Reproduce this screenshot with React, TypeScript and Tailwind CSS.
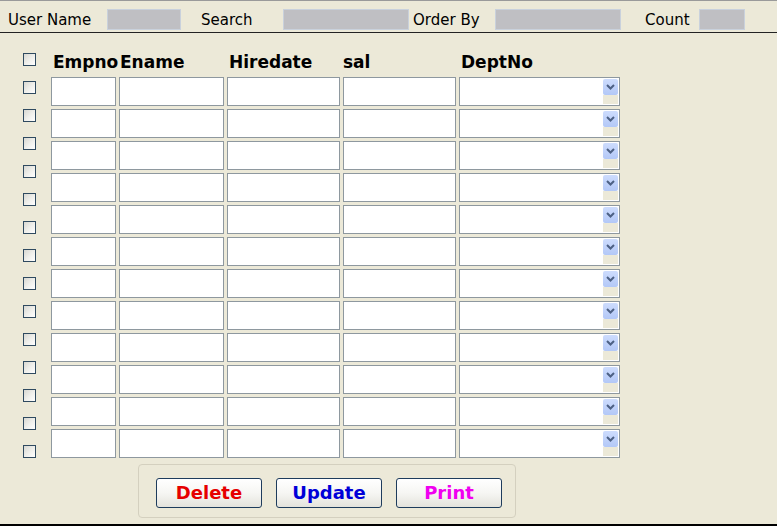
import React from "react"

const cols = [
  { name: "Empno", w: "w-[65px]", pad: "pl-[2px]" },
  { name: "Ename", w: "w-[105px]", pad: "pl-[1px]" },
  { name: "Hiredate", w: "w-[113px]", pad: "pl-[2px]" },
  { name: "sal", w: "w-[113px]", pad: "pl-0" },
]

const rows = Array.from({ length: 12 }, (_, i) => i)
const checks = Array.from({ length: 15 }, (_, i) => i)

function CheckBox() {
  return (
    <div className="w-[13px] h-[13px] border border-[#2f4a60] bg-gradient-to-br from-[#d8d8d2] via-[#eeeeea] to-white" />
  )
}

function DeptSelect() {
  return (
    <div className="w-[161px] h-[29px] flex border border-[#8e989f] bg-white p-[1px]">
      <div className="flex-1" />
      <div className="w-[15px] flex flex-col">
        <div className="h-[16px] rounded-[2px] bg-gradient-to-b from-[#cddcfd] to-[#b3c8f7] flex items-center justify-center">
          <svg width="9" height="6" viewBox="0 0 9 6">
            <path d="M1 1 L4.5 4.5 L8 1" fill="none" stroke="#4d6185" strokeWidth="2" />
          </svg>
        </div>
        <div className="flex-1 bg-[#ece9d8]" />
      </div>
    </div>
  )
}

function XpButton({ label, color }: { label: string; color: string }) {
  return (
    <button
      className={`w-[106px] h-[30px] rounded-[3px] border border-[#1e3c5c] bg-gradient-to-b from-white via-[#f6f6f3] to-[#e4e3dc] font-bold text-[18px] leading-none ${color}`}
    >
      {label}
    </button>
  )
}

export default function App() {
  return (
    <div
      className="w-[777px] h-[526px] flex flex-col bg-[#ece9d8] text-black border-b-2 border-black"
      style={{ fontFamily: '"DejaVu Sans", "Liberation Sans", sans-serif' }}
    >
      {/* Top filter bar */}
      <div className="h-[33px] flex items-start pt-[8px] pl-[8px] border-t border-[#9a9a9a] border-b border-b-[#222] text-[15px] leading-[21px]">
        <span className="w-[99px] pt-[1px]">User Name</span>
        <div className="w-[74px] h-[21px] bg-[#bfbfc3] border border-[#c9d1dc]" />
        <span className="w-[82px] ml-[20px] pt-[1px]">Search</span>
        <div className="w-[126px] h-[21px] bg-[#bfbfc3] border border-[#c9d1dc]" />
        <span className="w-[82px] ml-[4px] pt-[1px]">Order By</span>
        <div className="w-[126px] h-[21px] bg-[#bfbfc3] border border-[#c9d1dc]" />
        <span className="w-[54px] ml-[24px] pt-[1px]">Count</span>
        <div className="w-[46px] h-[21px] bg-[#bfbfc3] border border-[#c9d1dc]" />
      </div>

      {/* Grid area */}
      <div className="flex">
        <div className="ml-[23px] pt-[20px] flex flex-col gap-[15px]">
          {checks.map((i) => (
            <CheckBox key={i} />
          ))}
        </div>

        <div className="ml-[15px] pt-[19px]">
          <div className="flex gap-[3px] h-[20px] leading-[20px] font-bold text-[17px] mb-[5px]">
            {cols.map((c) => (
              <div key={c.name} className={`${c.w} ${c.pad} whitespace-nowrap`}>
                {c.name}
              </div>
            ))}
            <div className="w-[161px] pl-[2px]">DeptNo</div>
          </div>

          <div className="flex flex-col gap-[3px]">
            {rows.map((r) => (
              <div key={r} className="flex gap-[3px]">
                {cols.map((c) => (
                  <div key={c.name} className={`${c.w} h-[29px] bg-white border border-[#8e989f]`} />
                ))}
                <DeptSelect />
              </div>
            ))}
          </div>
        </div>
      </div>

      {/* Action buttons */}
      <div className="ml-[138px] mt-[6px] w-[378px] h-[54px] rounded-[4px] border border-[#d4d0bf] flex items-start gap-[14px] pl-[17px] pt-[13px]">
        <XpButton label="Delete" color="text-[#e60000]" />
        <XpButton label="Update" color="text-[#0000d8]" />
        <XpButton label="Print" color="text-[#f000f0]" />
      </div>
    </div>
  )
}
